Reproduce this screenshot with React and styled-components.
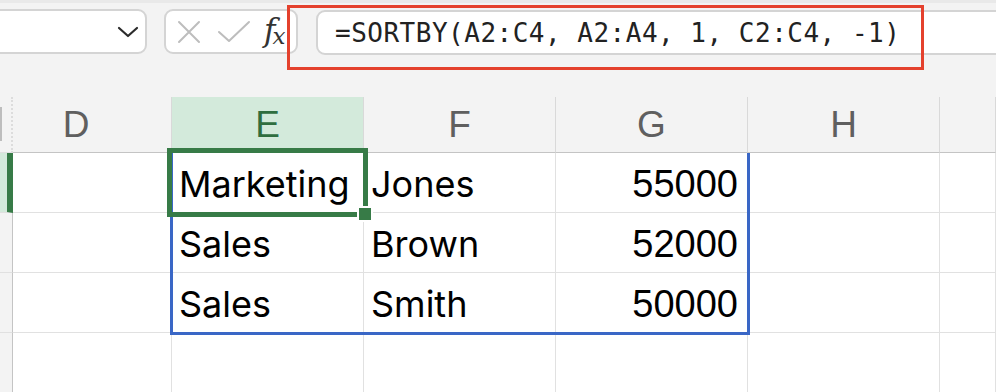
import React from 'react'
import styled, { createGlobalStyle } from 'styled-components'

const green = '#377b47'
const blue = '#3a67c6'

const Global = createGlobalStyle`
  html, body {
    margin: 0;
    padding: 0;
    background: #ffffff;
  }
`

const Page = styled.div`
  width: 996px;
  height: 392px;
  overflow: hidden;
  background: #ffffff;
  font-family: Inter, "Noto Sans", sans-serif;
`

const Toolbar = styled.div`
  position: relative;
  height: 97px;
  box-sizing: border-box;
  padding-top: 9px;
  display: flex;
  align-items: flex-start;
  gap: 17px;
  background: #f3f3f3;
  border-top: 3px solid #e9e9e9;
`

const Box = styled.div`
  height: 45px;
  box-sizing: border-box;
  background: #ffffff;
  border: 2px solid #d4d4d4;
  border-radius: 9px;
  display: flex;
  align-items: center;
`

const NameBox = styled(Box)`
  margin-left: -14px;
  margin-top: -3px;
  width: 161px;
  justify-content: flex-end;
  padding-right: 6px;
`

const FxBox = styled(Box)`
  margin-top: -3px;
  width: 134px;
  padding: 0 0 0 11px;
  gap: 16px;
`

const FormulaBox = styled(Box)`
  margin-top: -2px;
  margin-left: 1px;
  flex: 1;
  margin-right: -20px;
  padding-left: 17px;
  font-family: "DejaVu Sans Mono", "Liberation Mono", monospace;
  font-size: 26px;
  letter-spacing: 0.5px;
  color: #222222;
  white-space: pre;
`

const Fx = styled.span`
  font-family: "DejaVu Serif", "Liberation Serif", serif;
  font-style: italic;
  font-size: 31px;
  line-height: 1;
  color: #333333;
  margin-left: -3px;
  letter-spacing: -3px;

  sub {
    font-size: 23px;
    vertical-align: -3px;
  }
`

const Annotation = styled.div`
  position: absolute;
  left: 287px;
  top: 2px;
  width: 637px;
  height: 65px;
  box-sizing: border-box;
  border: 3px solid #e4412d;
`

const Sheet = styled.div`
  position: relative;
`

const Row = styled.div`
  display: grid;
  grid-template-columns: 13px 159px 192px 192px 192px 192px 1fr;
  height: ${p => p.$h}px;
`

const HeadCell = styled.div`
  box-sizing: border-box;
  background: ${p => (p.$sel ? '#d3eadb' : '#f3f3f3')};
  color: ${p => (p.$sel ? '#2f6e3f' : '#5f5f5f')};
  border-right: 1px solid #d9d9d9;
  border-bottom: 1px solid #c4c4c4;
  display: flex;
  align-items: center;
  justify-content: center;
  padding-right: ${p => p.$shift || 0}px;
  font-family: "Liberation Sans", Arial, sans-serif;
  font-size: 37px;
`

const Corner = styled.div`
  box-sizing: border-box;
  background: #f3f3f3;
  border-right: 2px dotted #dcdcdc;
  border-bottom: 1px solid #e0e0e0;
  padding-top: 10px;

  &::before {
    content: '';
    display: block;
    width: 2px;
    height: 34px;
    background: #bdbdbd;
  }
`

const RowHead = styled.div`
  box-sizing: border-box;
  background: ${p => (p.$sel ? '#d3eadb' : '#f3f3f3')};
  border-right: ${p => (p.$sel ? `6px solid ${green}` : '1px solid #c4c4c4')};
  border-bottom: 1px solid #e0e0e0;
`

const Cell = styled.div`
  box-sizing: border-box;
  border-right: 1px solid #e1e1e1;
  border-bottom: 1px solid #e1e1e1;
  display: flex;
  align-items: center;
  justify-content: ${p => (p.$num ? 'flex-end' : 'flex-start')};
  padding: ${p => (p.$num ? '3px 9px 0 0' : '3px 0 0 7px')};
  font-family: ${p => (p.$num ? '"Liberation Sans", Arial, sans-serif' : 'Inter, "Noto Sans", sans-serif')};
  font-size: ${p => (p.$num ? 38 : 36)}px;
  color: #000000;
  white-space: nowrap;
  overflow: visible;
`

const SpillRange = styled.div`
  position: absolute;
  left: 170px;
  top: 56px;
  width: 580px;
  height: 182px;
  box-sizing: border-box;
  border: 3px solid ${blue};
  border-top: none;
`

const ActiveCell = styled.div`
  position: absolute;
  left: 167px;
  top: 51px;
  width: 201px;
  height: 69px;
  box-sizing: border-box;
  border: 5px solid ${green};
`

const FillHandle = styled.div`
  position: absolute;
  left: 357px;
  top: 109px;
  width: 12px;
  height: 12px;
  background: ${green};
  border: 2px solid #ffffff;
`

const Icon = ({ children, w, h, color = '#bdbdbd', sw = 2 }) => (
  <svg width={w} height={h} viewBox={`0 0 ${w} ${h}`} fill="none" stroke={color} strokeWidth={sw} strokeLinecap="round" strokeLinejoin="round">
    {children}
  </svg>
)

const columns = ['D', 'E', 'F', 'G', 'H', '']
const rows = [
  ['Marketing', 'Jones', '55000'],
  ['Sales', 'Brown', '52000'],
  ['Sales', 'Smith', '50000'],
  ['', '', '']
]

export default function App () {
  return (
    <Page>
      <Global />
      <Toolbar>
        <NameBox>
          <Icon w={22} h={14} color="#2b2b2b" sw={2.2}>
            <path d="M2 3 L11 11 L20 3" />
          </Icon>
        </NameBox>
        <FxBox>
          <Icon w={24} h={24}>
            <path d="M2 2 L22 22 M22 2 L2 22" />
          </Icon>
          <Icon w={34} h={24}>
            <path d="M2 12 L12 21 L32 2" />
          </Icon>
          <Fx>f<sub>x</sub></Fx>
        </FxBox>
        <FormulaBox>=SORTBY(A2:C4, A2:A4, 1, C2:C4, -1)</FormulaBox>
        <Annotation />
      </Toolbar>

      <Sheet>
        <Row $h={56}>
          <Corner />
          {columns.map((c, i) => (
            <HeadCell key={i} $sel={c === 'E'} $shift={c === 'D' ? 32 : 0}>{c}</HeadCell>
          ))}
        </Row>
        {rows.map((r, i) => (
          <Row key={i} $h={60}>
            <RowHead $sel={i === 0} />
            <Cell />
            <Cell>{r[0]}</Cell>
            <Cell>{r[1]}</Cell>
            <Cell $num>{r[2]}</Cell>
            <Cell />
            <Cell />
          </Row>
        ))}
        <SpillRange />
        <ActiveCell />
        <FillHandle />
      </Sheet>
    </Page>
  )
}
